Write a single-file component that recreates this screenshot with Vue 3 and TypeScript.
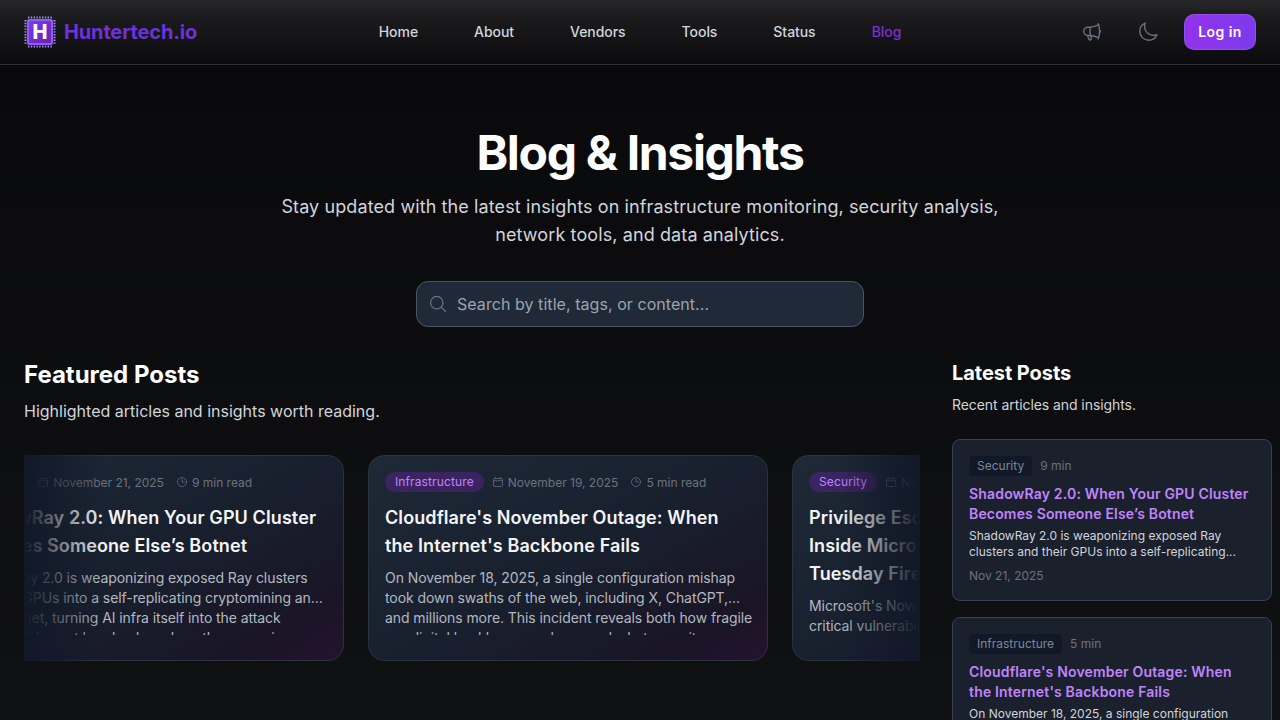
<template>
  <div class="page">
    <header class="nav">
      <a class="brand">
        <svg class="brand-mark" width="32" height="32" viewBox="0 0 32 32">
          <path d="M4 1.5H28M4 30.5H28" stroke="#a78bfa" stroke-width="2" stroke-dasharray="1.4 1.4" fill="none" />
          <path d="M1.5 4V28M30.5 4V28" stroke="#a78bfa" stroke-width="2" stroke-dasharray="1.4 1.4" fill="none" />
          <rect x="3" y="3" width="26" height="26" rx="2" fill="#8b5cf6" />
          <rect x="5" y="5" width="22" height="22" rx="1.5" fill="url(#chip)" />
          <defs>
            <linearGradient id="chip" x1="0" y1="0" x2="1" y2="1">
              <stop offset="0" stop-color="#7c3aed" />
              <stop offset="1" stop-color="#6b21a8" />
            </linearGradient>
          </defs>
          <text x="16" y="23" text-anchor="middle" class="brand-h">H</text>
        </svg>
        <span class="brand-name">Huntertech.io</span>
      </a>
      <nav class="links">
        <a v-for="l in links" :key="l" class="link" :class="{ active: l === 'Blog' }">{{ l }}</a>
      </nav>
      <div class="actions">
        <button class="icon-btn" aria-label="Announcements">
          <svg width="22" height="22" viewBox="0 0 24 24" fill="none" stroke="currentColor" stroke-width="1.5" stroke-linecap="round" stroke-linejoin="round">
            <path d="M10.34 15.84c-.688-.06-1.386-.09-2.09-.09H7.5a4.5 4.5 0 1 1 0-9h.75c.704 0 1.402-.03 2.09-.09m0 9.18c.253.962.584 1.892.985 2.783.247.55.06 1.21-.463 1.511l-.657.38c-.551.318-1.26.117-1.527-.461a20.845 20.845 0 0 1-1.44-4.282m3.102.069a18.03 18.03 0 0 1-.59-4.59c0-1.586.205-3.124.59-4.59m0 9.18a23.848 23.848 0 0 1 8.835 2.535M10.34 6.66a23.847 23.847 0 0 0 8.835-2.535m0 0A23.74 23.74 0 0 0 18.795 3m.38 1.125a23.91 23.91 0 0 1 1.014 5.395m-1.014 8.855c-.118.38-.245.754-.38 1.125m.38-1.125a23.91 23.91 0 0 0 1.014-5.395m0-3.46c.495.413.811 1.035.811 1.73 0 .695-.316 1.317-.811 1.73m0-3.46a24.347 24.347 0 0 1 0 3.46" />
          </svg>
        </button>
        <button class="icon-btn" aria-label="Theme">
          <svg width="22" height="22" viewBox="0 0 24 24" fill="none" stroke="currentColor" stroke-width="1.5" stroke-linecap="round" stroke-linejoin="round">
            <path d="M21.752 15.002A9.72 9.72 0 0 1 18 15.75c-5.385 0-9.75-4.365-9.75-9.75 0-1.33.266-2.597.748-3.752A9.753 9.753 0 0 0 3 11.25C3 16.635 7.365 21 12.75 21a9.753 9.753 0 0 0 9.002-5.998Z" />
          </svg>
        </button>
        <button class="login">Log in</button>
      </div>
    </header>

    <section class="hero">
      <h1>Blog &amp; Insights</h1>
      <p>Stay updated with the latest insights on infrastructure monitoring, security analysis, network tools, and data analytics.</p>
      <div class="search">
        <svg class="search-icon" width="20" height="20" viewBox="0 0 24 24" fill="none" stroke="currentColor" stroke-width="1.5" stroke-linecap="round" stroke-linejoin="round">
          <path d="m21 21-5.197-5.197m0 0A7.5 7.5 0 1 0 5.196 5.196a7.5 7.5 0 0 0 10.607 10.607Z" />
        </svg>
        <input type="text" placeholder="Search by title, tags, or content..." />
      </div>
    </section>

    <main class="content">
      <section class="featured">
        <h2>Featured Posts</h2>
        <p class="sub">Highlighted articles and insights worth reading.</p>
        <div class="carousel">
          <div class="track">
            <article v-for="post in featured" :key="post.date" class="card">
              <div class="meta">
                <span class="pill">{{ post.tag }}</span>
                <span class="meta-item">
                  <svg width="12" height="12" viewBox="0 0 24 24" fill="none" stroke="currentColor" stroke-width="1.5" stroke-linecap="round" stroke-linejoin="round">
                    <path d="M6.75 3v2.25M17.25 3v2.25M3 18.75V7.5a2.25 2.25 0 0 1 2.25-2.25h13.5A2.25 2.25 0 0 1 21 7.5v11.25A2.25 2.25 0 0 1 18.75 21H5.25A2.25 2.25 0 0 1 3 18.75ZM3 9.5h18" />
                  </svg>
                  {{ post.date }}
                </span>
                <span class="meta-item">
                  <svg width="12" height="12" viewBox="0 0 24 24" fill="none" stroke="currentColor" stroke-width="1.5" stroke-linecap="round" stroke-linejoin="round">
                    <path d="M12 6v6h4.5m4.5 0a9 9 0 1 1-18 0 9 9 0 0 1 18 0Z" />
                  </svg>
                  {{ post.read }}
                </span>
              </div>
              <h3>{{ post.title }}</h3>
              <div class="excerpt">
                <div v-for="line in post.lines" :key="line">{{ line }}</div>
              </div>
            </article>
          </div>
          <div class="fade fade-left"></div>
          <div class="fade fade-right"></div>
        </div>
      </section>

      <aside class="latest">
        <h2>Latest Posts</h2>
        <p class="sub">Recent articles and insights.</p>
        <div class="latest-list">
          <article v-for="post in latest" :key="post.title" class="mini">
            <div class="mini-meta">
              <span class="chip">{{ post.tag }}</span>
              <span>{{ post.read }}</span>
            </div>
            <h4>{{ post.title }}</h4>
            <p class="mini-text">{{ post.text }}</p>
            <div class="mini-date">{{ post.date }}</div>
          </article>
        </div>
      </aside>
    </main>
  </div>
</template>

<script setup lang="ts">
const links = ['Home', 'About', 'Vendors', 'Tools', 'Status', 'Blog']

// excerpt lines are kept as written, the clamp ellipsis lands mid-text in the original
const featured = [
  {
    tag: 'Security',
    date: 'November 21, 2025',
    read: '9 min read',
    title: 'ShadowRay 2.0: When Your GPU Cluster Becomes Someone Else’s Botnet',
    lines: [
      'ShadowRay 2.0 is weaponizing exposed Ray clusters',
      'and their GPUs into a self-replicating cryptomining an...',
      'DDoS botnet, turning AI infra itself into the attack',
      'surface. This post breaks down how the campaign',
    ],
  },
  {
    tag: 'Infrastructure',
    date: 'November 19, 2025',
    read: '5 min read',
    title: "Cloudflare's November Outage: When the Internet's Backbone Fails",
    lines: [
      'On November 18, 2025, a single configuration mishap',
      'took down swaths of the web, including X, ChatGPT,...',
      'and millions more. This incident reveals both how fragile',
      'our digital backbone can be -- and what security',
    ],
  },
  {
    tag: 'Security',
    date: 'November 12, 2025',
    read: '7 min read',
    title: "Privilege Escalation at Every Layer — Inside Microsoft's November Patch Tuesday Fire Drill",
    lines: [
      "Microsoft's November Patch Tuesday addresses 63 flaws,",
      'critical vulnerabilities across Windows and Office...',
    ],
  },
]

const latest = [
  {
    tag: 'Security',
    read: '9 min',
    title: 'ShadowRay 2.0: When Your GPU Cluster Becomes Someone Else’s Botnet',
    text: 'ShadowRay 2.0 is weaponizing exposed Ray clusters and their GPUs into a self-replicating...',
    date: 'Nov 21, 2025',
  },
  {
    tag: 'Infrastructure',
    read: '5 min',
    title: "Cloudflare's November Outage: When the Internet's Backbone Fails",
    text: 'On November 18, 2025, a single configuration mishap took down swaths of the web...',
    date: 'Nov 19, 2025',
  },
]
</script>

<style>
html,
body {
  margin: 0;
  height: 100%;
  overflow: hidden;
  background: #0b0c0e;
}
</style>

<style scoped>
.page {
  height: 720px;
  overflow: hidden;
  font-family: Inter, "Liberation Sans", sans-serif;
  color: #fff;
  background: linear-gradient(180deg, #09090b 0%, #101113 100%);
}

/* top bar */
.nav {
  display: grid;
  grid-template-columns: 1fr auto 1fr;
  align-items: center;
  height: 64px;
  padding: 0 24px;
  background: linear-gradient(180deg, #27272a 0%, #1c1c1f 25%, #0b0b0d 100%);
  border-bottom: 1px solid #2f2f32;
}

.brand {
  display: flex;
  align-items: center;
  gap: 8px;
}

.brand-h {
  font-family: Inter, sans-serif;
  font-size: 20px;
  font-weight: 800;
  fill: #fff;
}

.brand-name {
  font-size: 20px;
  line-height: 28px;
  font-weight: 700;
  letter-spacing: -0.15px;
  color: #6d32d9;
}

.links {
  display: flex;
  gap: 56px;
}

.link {
  font-size: 14px;
  line-height: 20px;
  font-weight: 500;
  letter-spacing: -0.05px;
  color: #d1d5db;
}

.link.active {
  color: #7e2fd6;
}

.actions {
  display: flex;
  justify-content: flex-end;
  align-items: center;
  gap: 16px;
}

.icon-btn {
  display: flex;
  align-items: center;
  justify-content: center;
  width: 40px;
  height: 40px;
  padding: 0;
  border: 0;
  background: none;
  color: #6b7280;
}

.login {
  width: 72px;
  height: 36px;
  padding: 0 0 1px;
  border: 1px solid rgba(255, 255, 255, 0.12);
  border-radius: 10px;
  background: linear-gradient(90deg, #9333ea, #7c3aed);
  color: #fff;
  font-family: inherit;
  font-size: 14px;
  font-weight: 600;
  letter-spacing: 0.03em;
}

/* hero */
.hero {
  padding-top: 64px;
  text-align: center;
}

.hero h1 {
  margin: 0 0 16px;
  font-size: 48px;
  line-height: 48px;
  font-weight: 700;
  letter-spacing: -1.33px;
}

.hero p {
  width: 768px;
  margin: 0 auto 32px;
  font-size: 18px;
  line-height: 28px;
  letter-spacing: 0.105px;
  color: #d1d5db;
}

.search {
  position: relative;
  width: 448px;
  margin: 0 auto;
}

.search-icon {
  position: absolute;
  left: 12px;
  top: 13px;
  color: #6b7280;
}

.search input {
  display: block;
  box-sizing: border-box;
  width: 100%;
  height: 46px;
  padding: 0 16px 0 40px;
  border: 1px solid #4b5563;
  border-radius: 12px;
  outline: none;
  background: #1f2937;
  color: #fff;
  font-family: inherit;
  font-size: 16px;
  letter-spacing: 0.055px;
}

.search input::placeholder {
  color: #9ca3af;
}

/* two columns */
.content {
  display: grid;
  grid-template-columns: 1fr 320px;
  gap: 32px;
  padding: 32px 8px 0 24px;
}

.featured,
.latest {
  min-width: 0;
}

.featured h2 {
  margin: 0 0 8px;
  font-size: 24px;
  line-height: 32px;
  font-weight: 700;
}

.featured .sub {
  margin: 0 0 32px;
  font-size: 16px;
  line-height: 24px;
  color: #d1d5db;
}

.carousel {
  position: relative;
  overflow: hidden;
}

.track {
  display: flex;
  gap: 24px;
  margin-left: -80px;
}

.card {
  flex: 0 0 400px;
  width: 400px;
  min-width: 0;
  overflow: hidden;
  box-sizing: border-box;
  height: 206px;
  padding: 16px;
  border: 1px solid #2b3340;
  border-radius: 16px;
  background: linear-gradient(150deg, #1e2936 0%, #18202e 50%, #1a1526 85%, #25122e 100%);
}

.meta {
  display: flex;
  align-items: center;
  gap: 12px;
  height: 20px;
  font-size: 12px;
  color: #6b7280;
  white-space: nowrap;
}

.pill {
  margin-right: -4px;
  padding: 0 10px;
  line-height: 20px;
  letter-spacing: 0.12px;
  border-radius: 999px;
  background: rgba(107, 33, 168, 0.4);
  color: #c084fc;
}

.meta-item {
  display: flex;
  align-items: center;
  gap: 4px;
}

.card h3 {
  margin: 12px 0 8px;
  font-size: 18px;
  line-height: 28px;
  font-weight: 600;
  letter-spacing: 0.1px;
  color: #f3f4f6;
}

.excerpt {
  height: 67px;
  clip-path: inset(0 -24px 0 0);
  font-size: 14px;
  line-height: 20px;
  letter-spacing: -0.08px;
  color: #b4b8c0;
  white-space: nowrap;
}

.fade {
  position: absolute;
  top: 0;
  bottom: 0;
  width: 80px;
  pointer-events: none;
}

.fade-left {
  left: 0;
  background: linear-gradient(90deg, #111827, rgba(17, 24, 39, 0));
}

.fade-right {
  right: 0;
  background: linear-gradient(270deg, #111827, rgba(17, 24, 39, 0));
}

/* latest column */
.latest h2 {
  margin: 0 0 8px;
  font-size: 20px;
  line-height: 28px;
  font-weight: 700;
  letter-spacing: -0.05px;
}

.latest .sub {
  margin: 0 0 24px;
  font-size: 14px;
  line-height: 20px;
  letter-spacing: -0.07px;
  color: #d1d5db;
}

.latest-list {
  display: flex;
  flex-direction: column;
  gap: 16px;
}

.mini {
  padding: 16px;
  border: 1px solid #374151;
  border-radius: 8px;
  background: #1a202c;
}

.mini-meta {
  display: flex;
  align-items: center;
  gap: 8px;
  font-size: 12px;
  line-height: 20px;
  color: #6b7280;
}

.chip {
  padding: 0 8px;
  border-radius: 4px;
  background: #111827;
  color: #7e8794;
}

.mini h4 {
  margin: 8px 0 4px;
  font-size: 14px;
  line-height: 20px;
  font-weight: 600;
  letter-spacing: 0.17px;
  color: #c084fc;
}

.mini-text {
  margin: 0 0 8px;
  font-size: 12px;
  line-height: 16px;
  color: #d1d5db;
}

.mini-date {
  font-size: 12px;
  line-height: 16px;
  color: #6b7280;
}
</style>
